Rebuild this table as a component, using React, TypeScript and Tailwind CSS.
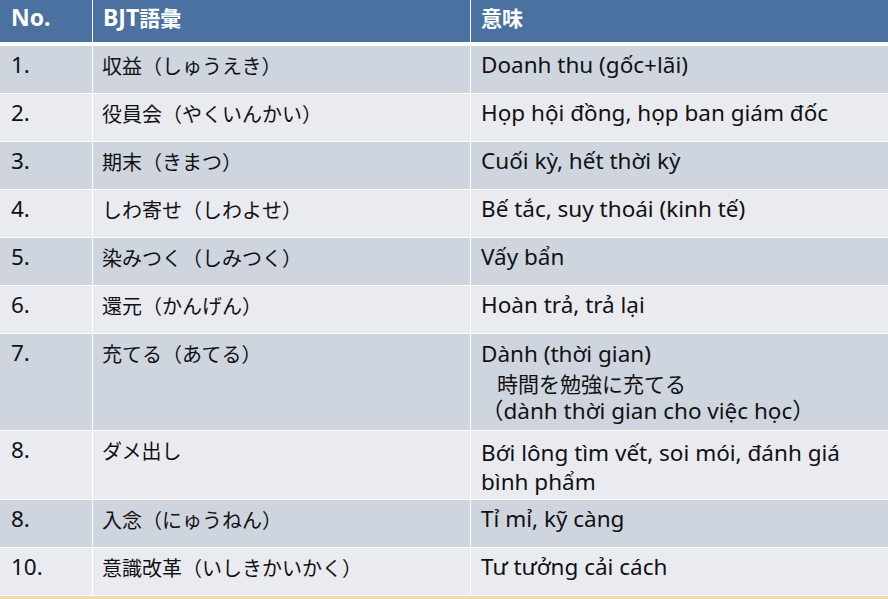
import React from "react";

type Row = { no: string; jp: string; vi: React.ReactNode; h: number; dark: boolean };

const rows: Row[] = [
  { no: "1.", jp: "収益（しゅうえき）", vi: "Doanh thu (gốc+lãi)", h: 47, dark: true },
  { no: "2.", jp: "役員会（やくいんかい）", vi: "Họp hội đồng, họp ban giám đốc", h: 47, dark: false },
  { no: "3.", jp: "期末（きまつ）", vi: "Cuối kỳ, hết thời kỳ", h: 47, dark: true },
  { no: "4.", jp: "しわ寄せ（しわよせ）", vi: "Bế tắc, suy thoái (kinh tế)", h: 47, dark: false },
  { no: "5.", jp: "染みつく（しみつく）", vi: "Vấy bẩn", h: 47, dark: true },
  { no: "6.", jp: "還元（かんげん）", vi: "Hoàn trả, trả lại", h: 47, dark: false },
  { no: "7.", jp: "充てる（あてる）", vi: null, h: 96, dark: true },
  { no: "8.", jp: "ダメ出し", vi: null, h: 68, dark: false },
  { no: "8.", jp: "入念（にゅうねん）", vi: "Tỉ mỉ, kỹ càng", h: 47, dark: true },
  { no: "10.", jp: "意識改革（いしきかいかく）", vi: "Tư tưởng cải cách", h: 47, dark: false },
];

const latin = "font-['Noto_Sans','Noto_Sans_CJK_JP',sans-serif]";
const jpFont = "font-['Noto_Sans_CJK_JP',sans-serif]";

export default function App() {
  return (
    <div className={`w-[888px] h-[599px] overflow-hidden bg-white flex flex-col ${latin} text-[#111]`}>
      <div className="flex h-[42px] shrink-0 gap-px text-white font-bold text-[23px] leading-[30px]">
        <div className="w-[92px] bg-[#4a71a0] pt-[2px] pl-[11px]">No.</div>
        <div className="w-[377px] bg-[#4a71a0] pt-[2px] pl-[10px]">
          BJT<span className={`${jpFont} text-[21px]`}>語彙</span>
        </div>
        <div className="flex-1 bg-[#4a71a0] pt-[2px] pl-[10px]">
          <span className={`${jpFont} text-[21px]`}>意味</span>
        </div>
      </div>
      <div className="h-[4px] shrink-0" />
      <div className="flex flex-col gap-px">
        {rows.map((r, i) => {
          const bg = r.dark ? "bg-[#cfd5df]" : "bg-[#e9ebf1]";
          return (
            <div key={i} className="flex gap-px shrink-0" style={{ height: r.h }}>
              <div className={`w-[92px] ${bg} pl-[11px] pt-[5px] text-[22.5px] leading-[28px]`}>{r.no}</div>
              <div className={`w-[377px] ${bg} pl-[9px] pt-[6px] text-[20px] leading-[28px] ${jpFont}`}>{r.jp}</div>
              <div className={`flex-1 ${bg} pl-[10px]`}>
                {i === 6 ? (
                  <div className="pt-[6px] text-[22.5px] leading-[28.5px]">
                    <div>Dành (thời gian)</div>
                    <div className={`pl-[16px] ${jpFont} text-[21px]`}>時間を勉強に充てる</div>
                    <div>（dành thời gian cho việc học）</div>
                  </div>
                ) : i === 7 ? (
                  <div className="pt-[7px] text-[22.5px] leading-[29px]">
                    <div className="whitespace-nowrap">Bới lông tìm vết, soi mói, đánh giá</div>
                    <div>bình phẩm</div>
                  </div>
                ) : (
                  <div className="pt-[5px] text-[22.5px] leading-[28px]">{r.vi}</div>
                )}
              </div>
            </div>
          );
        })}
      </div>
      <div className="mt-px flex-1 bg-[#f0dbaf]" />
    </div>
  );
}
